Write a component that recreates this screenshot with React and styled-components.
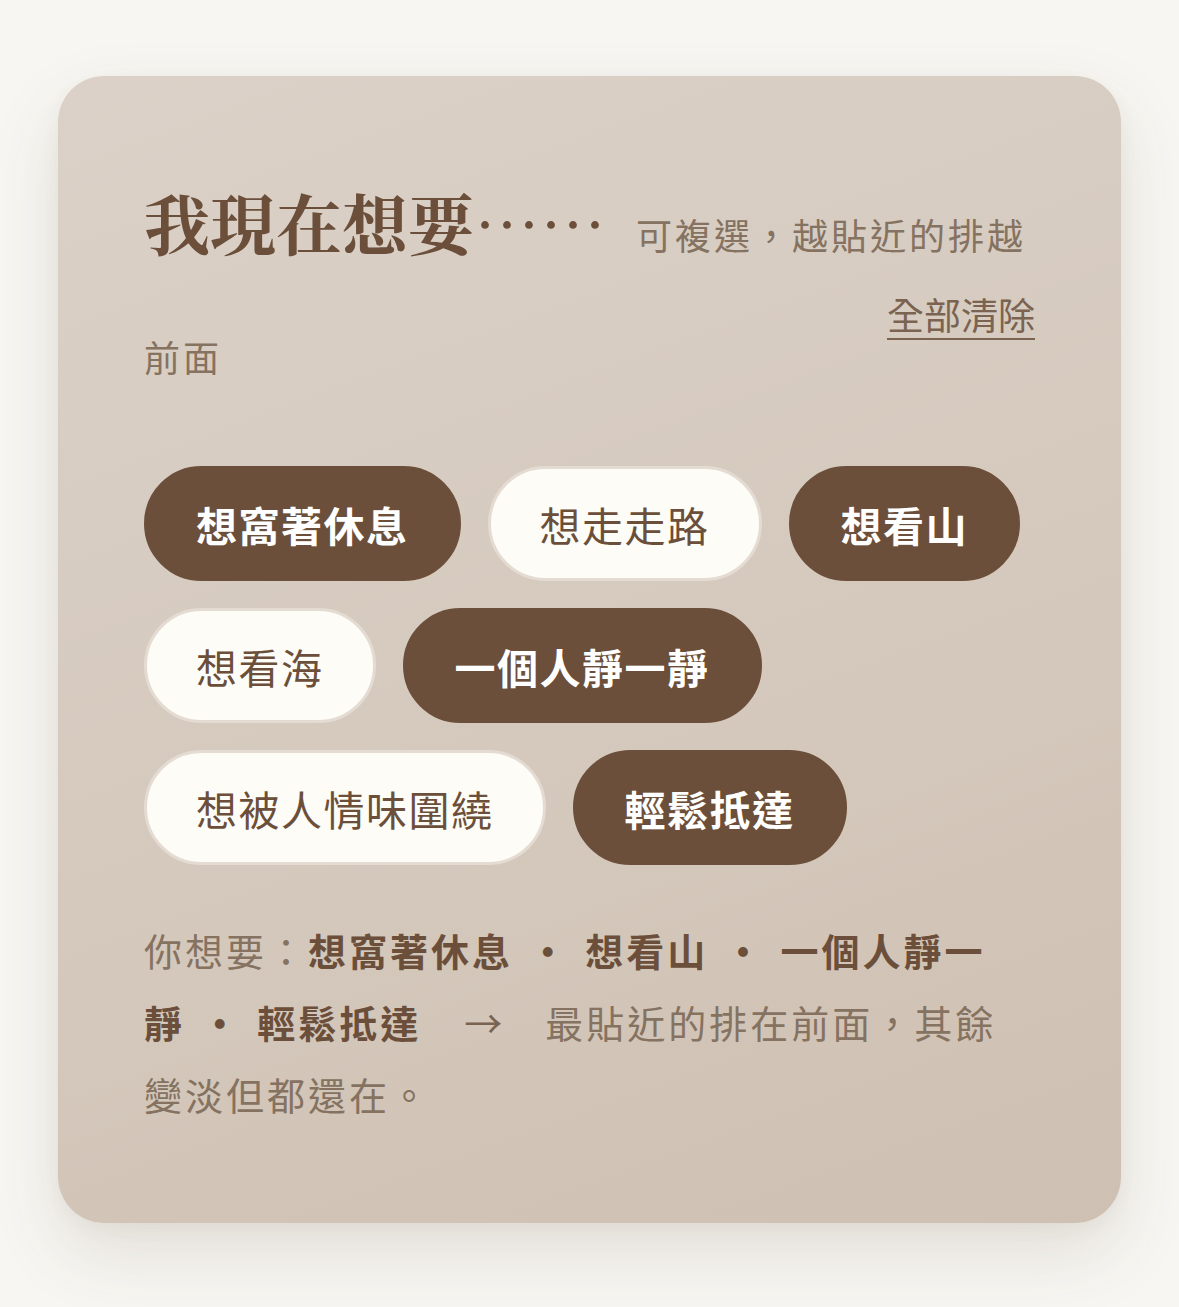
import React, { useState } from "react";
import styled, { createGlobalStyle } from "styled-components";

const GlobalStyle = createGlobalStyle`
  html, body {
    margin: 0;
    padding: 0;
    background: #f7f6f2;
  }
  body {
    font-family: "Noto Sans CJK TC", "Noto Sans", sans-serif;
  }
`;

const OPTIONS = [
  "想窩著休息",
  "想走走路",
  "想看山",
  "想看海",
  "一個人靜一靜",
  "想被人情味圍繞",
  "輕鬆抵達",
];

const App = () => {
  const [picked, setPicked] = useState(["想窩著休息", "想看山", "一個人靜一靜", "輕鬆抵達"]);

  const toggle = (name) => {
    setPicked((prev) =>
      prev.includes(name) ? prev.filter((p) => p !== name) : [...prev, name]
    );
  };

  const chosen = OPTIONS.filter((o) => picked.includes(o));

  return (
    <Page>
      <GlobalStyle />
      <Card>
        <Header>
          <Title>我現在想要……</Title>
          <Hint>可複選，越貼近的排越前面</Hint>
          <ClearButton onClick={() => setPicked([])}>全部清除</ClearButton>
        </Header>

        <Chips>
          {OPTIONS.map((name) => (
            <Chip
              key={name}
              $active={picked.includes(name)}
              onClick={() => toggle(name)}
            >
              {name}
            </Chip>
          ))}
        </Chips>

        <Summary>
          你想要：
          {chosen.map((name, i) => (
            <React.Fragment key={name}>
              {i > 0 && <Separator> ・ </Separator>}
              <Strong>{name}</Strong>
            </React.Fragment>
          ))}
          <Arrow>→</Arrow>
          最貼近的排在前面，其餘變淡但都還在。
        </Summary>
      </Card>
    </Page>
  );
};

const Page = styled.div`
  padding: 76px 58px 84px;
`;

const Card = styled.section`
  box-sizing: border-box;
  min-height: 1147px;
  padding: 86px 86px 88px;
  border-radius: 46px;
  background: linear-gradient(160deg, #dbd1c8 0%, #d5c9bd 55%, #cec0b2 100%);
  box-shadow: 0 30px 70px rgba(90, 70, 50, 0.13), 0 6px 18px rgba(90, 70, 50, 0.05);
`;

const Header = styled.div`
  padding-top: 3px;
  line-height: 113px;
  margin-bottom: 44px;
`;

const Title = styled.h2`
  display: inline;
  margin: 0;
  font-family: "Noto Serif CJK TC", "Noto Serif CJK JP", "Liberation Serif", "Noto Sans CJK TC", serif;
  font-size: 66px;
  font-weight: 700;
  color: #6b4f3a;
`;

const Hint = styled.span`
  margin-left: 30px;
  font-size: 36px;
  letter-spacing: 3px;
  color: #857260;
`;

const ClearButton = styled.button`
  float: right;
  margin-top: -16px;
  padding: 0;
  border: none;
  background: none;
  font-family: inherit;
  font-size: 37px;
  line-height: 60px;
  color: #7a6350;
  text-decoration: underline;
  text-underline-offset: 8px;
  text-decoration-thickness: 2px;
  cursor: pointer;
`;

const Chips = styled.div`
  display: flex;
  flex-wrap: wrap;
  gap: 27px 27px;
`;

const Chip = styled.button`
  box-sizing: border-box;
  height: 115px;
  padding: 0 49px 0 49px;
  border-radius: 999px;
  border: 3px solid ${(p) => (p.$active ? "#6b4f3a" : "#e4dbd2")};
  background: ${(p) => (p.$active ? "#6b4f3a" : "#fdfcf7")};
  color: ${(p) => (p.$active ? "#ffffff" : "#6b4f3a")};
  font-family: "Noto Sans CJK TC", "Noto Sans", sans-serif;
  font-size: 41px;
  font-weight: ${(p) => (p.$active ? 700 : 400)};
  letter-spacing: 1.5px;
  cursor: pointer;
`;

const Summary = styled.p`
  max-width: 870px;
  margin: 49px 0 0;
  font-size: 38px;
  line-height: 72px;
  letter-spacing: 3px;
  color: #857260;
`;

const Strong = styled.strong`
  font-weight: 700;
  color: #6b4f3a;
`;

const Separator = styled(Strong)`
  padding: 0 4px;
`;

const Arrow = styled.span`
  margin: 0 40px 0 43px;
  color: #7a6350;
`;

export default App;
